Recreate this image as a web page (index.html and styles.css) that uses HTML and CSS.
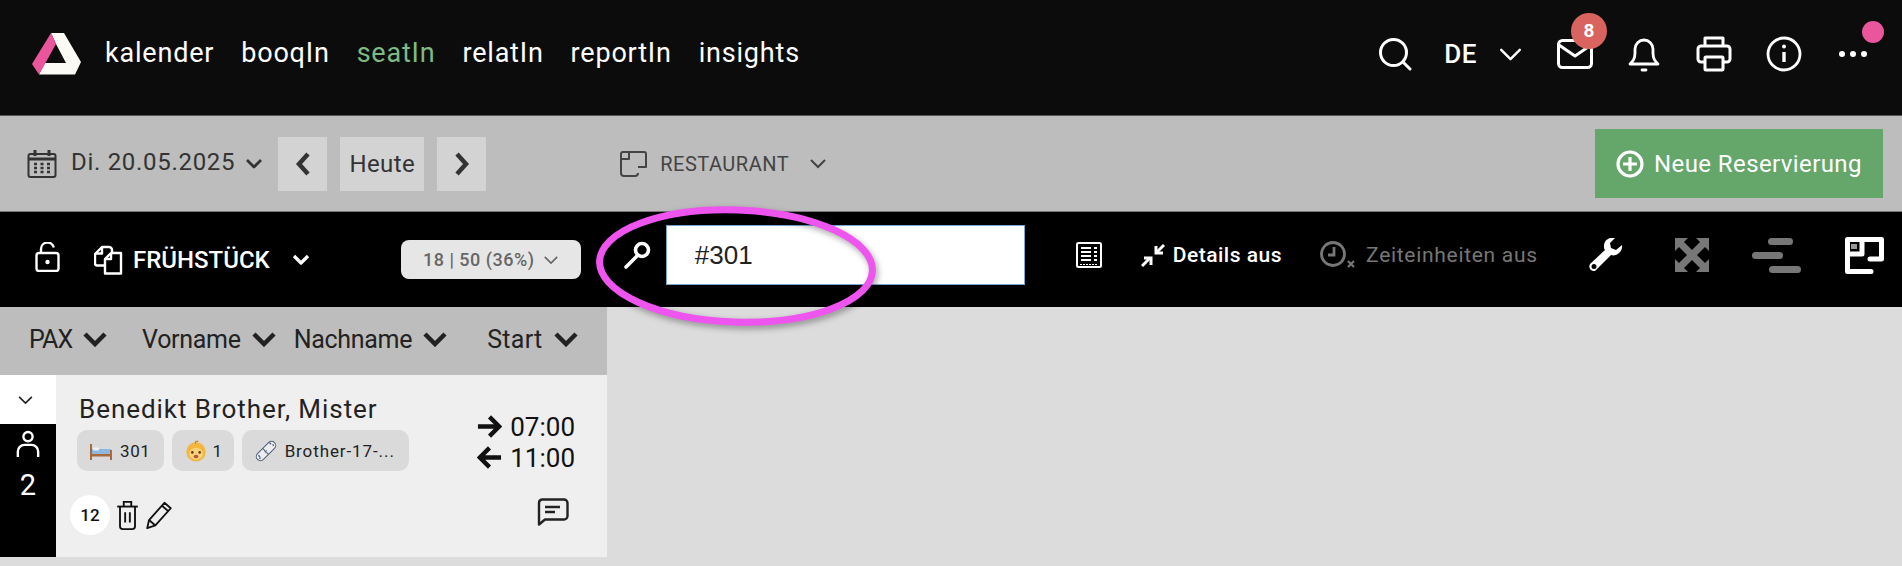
FILE: index.html
```html
<!DOCTYPE html>
<html lang="en">
<head>
  <meta charset="UTF-8" />
  <title>seatIn</title>
  <link rel="stylesheet" href="styles.css">
</head>
<body>
  <header class="topbar">
    <svg class="logo" viewBox="0 0 50 42">
      <path d="M19 0H32L49 29L43 41.500H7L13 30H34L24 11Z" fill="#fbfaf5"/>
      <path d="M19 0L24 11L7 41.500L0 31Z" fill="#ea559c"/>
    </svg>
    <nav class="mainnav">
      <a>kalender</a>
      <a>booqIn</a>
      <a class="active">seatIn</a>
      <a>relatIn</a>
      <a>reportIn</a>
      <a>insights</a>
    </nav>
    <div class="topicons">
      <svg class="ico-search" viewBox="0 0 34 34" fill="none" stroke="#fff" stroke-width="3" stroke-linecap="round"><circle cx="15.500" cy="15.500" r="13"/><path d="M25 25l7 7"/></svg>
      <span class="lang">DE</span>
      <svg class="ico-langchev" viewBox="0 0 24 14" fill="none" stroke="#fff" stroke-width="2.600" stroke-linecap="round" stroke-linejoin="round"><path d="M2 2l10 10L22 2"/></svg>
      <span class="mail">
        <svg class="ico-mail" viewBox="0 0 36 30" fill="none" stroke="#fff" stroke-width="3" stroke-linejoin="round"><rect x="1.500" y="1.500" width="33" height="27" rx="4"/><path d="M2 6l16 11L34 6"/></svg>
        <span class="badge">8</span>
      </span>
      <svg class="ico-bell" viewBox="0 0 32 36" fill="none" stroke="#fff" stroke-width="2.800" stroke-linecap="round" stroke-linejoin="round"><path d="M2 28c3-3 5-5 5-11V13a9 9 0 0 1 18 0v4c0 6 2 8 5 11z"/><path d="M14 34h4"/></svg>
      <svg class="ico-print" viewBox="0 0 36 36" fill="none" stroke="#fff" stroke-width="3" stroke-linejoin="round"><path d="M9 10V2h18v8"/><path d="M9 26H5a3 3 0 0 1-3-3V13a3 3 0 0 1 3-3h26a3 3 0 0 1 3 3v10a3 3 0 0 1-3 3h-4"/><rect x="9" y="21" width="18" height="13" rx="1"/></svg>
      <svg class="ico-info" viewBox="0 0 36 36" fill="none" stroke="#fff" stroke-width="2.800"><circle cx="18" cy="18" r="16"/><path d="M18 16v10" stroke-width="3.400"/><circle cx="18" cy="10.500" r="2" fill="#fff" stroke="none"/></svg>
      <span class="more">
        <svg class="ico-dots" viewBox="0 0 30 8" fill="#fff"><circle cx="4" cy="4" r="3"/><circle cx="15" cy="4" r="3"/><circle cx="26" cy="4" r="3"/></svg>
        <span class="pinkdot"></span>
      </span>
    </div>
  </header>

  <section class="datebar">
    <svg class="ico-cal" viewBox="0 0 30 28" fill="none" stroke="#333" stroke-width="2"><rect x="1.500" y="4" width="27" height="23" rx="2"/><path d="M1.500 9h27" stroke-width="3"/><path d="M8 0v6M22 0v6" stroke-width="3"/><path d="M7 14h3M13.500 14h3M20 14h3M7 18h3M13.500 18h3M20 18h3M7 22h3M13.500 22h3M20 22h3" stroke-width="2.400"/></svg>
    <span class="date">Di. 20.05.2025</span>
    <svg class="ico-datechev" viewBox="0 0 18 11" fill="none" stroke="#333" stroke-width="2.800" stroke-linejoin="round"><path d="M2 2l7 7 7-7"/></svg>
    <button class="navbtn square"><svg viewBox="0 0 16 24" fill="none" stroke="#333" stroke-width="4.500"><path d="M13 2L4 12l9 10"/></svg></button>
    <button class="navbtn today">Heute</button>
    <button class="navbtn square"><svg viewBox="0 0 16 24" fill="none" stroke="#333" stroke-width="4.500"><path d="M3 2l9 10-9 10"/></svg></button>
    <svg class="ico-room" viewBox="0 0 28 26" fill="none" stroke="#444" stroke-width="2" stroke-linejoin="round"><path d="M1 22V3a2 2 0 0 1 2-2h21a2 2 0 0 1 2 2v13h-8"/><path d="M1 8h8V1"/><path d="M1 22a3 3 0 0 0 3 3h11a3 3 0 0 0 3-3"/></svg>
    <span class="room">RESTAURANT</span>
    <svg class="ico-roomchev" viewBox="0 0 18 11" fill="none" stroke="#444" stroke-width="2"><path d="M2 2l7 7 7-7"/></svg>
    <button class="newres">
      <svg viewBox="0 0 28 28" fill="none" stroke="#fff" stroke-width="3.200"><circle cx="14" cy="14" r="12"/><path d="M14 7v14M7 14h14"/></svg>
      Neue Reservierung
    </button>
  </section>

  <section class="filterbar">
    <svg class="ico-lock" viewBox="0 0 25 30" fill="none" stroke="#fff" stroke-width="2.400"><rect x="1.500" y="11" width="22" height="18" rx="2.500"/><path d="M6 11V7a6.500 6.500 0 0 1 12.800-1.500"/><circle cx="12.500" cy="20" r="2.200" fill="#fff" stroke="none"/></svg>
    <svg class="ico-copy" viewBox="0 0 29 30" fill="none" stroke="#fff" stroke-width="2.400" stroke-linejoin="round"><path d="M10 20.500H3a2 2 0 0 1-2-2V9l7-7h7a3 3 0 0 1 3 3v3"/><path d="M8 2v6.500H1.500"/><path d="M11 14l6-6h10v20.500H11z"/><path d="M17 8v6h-6"/></svg>
    <span class="meal">FRÜHSTÜCK</span>
    <svg class="ico-mealchev" viewBox="0 0 18 12" fill="none" stroke="#fff" stroke-width="3.200" stroke-linejoin="round"><path d="M2 2l7 7 7-7"/></svg>
    <span class="pill">18 | 50 (36%)
      <svg viewBox="0 0 18 11" fill="none" stroke="#666" stroke-width="1.800"><path d="M2 2l7 7 7-7"/></svg>
    </span>
    <div class="filtertools">
      <svg class="ico-key" viewBox="0 0 30 30" fill="none" stroke="#fff"><circle cx="19" cy="10" r="6.500" stroke-width="3.600"/><path d="M14 16L3 27" stroke-width="3.600" stroke-linecap="round"/></svg>
      <input class="search" type="text" value="#301" />
      <svg class="ico-list" viewBox="0 0 26 26" fill="none" stroke="#fff" stroke-width="2"><rect x="1" y="1" width="24" height="24" rx="1.500"/><path d="M5 6h10M5 10h10M5 14h10M5 18h10M18 6h3M18 10h3M18 14h3M18 18h3"/><path d="M4 22.500h18" stroke-width="1" stroke-dasharray="2 1"/></svg>
      <span class="toggle on">
        <svg viewBox="0 0 24 24" fill="none" stroke="#fff" stroke-width="3"><path d="M23 2l-8 8"/><path d="M15 3v7h7"/><path d="M1 23l8-8"/><path d="M3 15h7v7"/></svg>
        Details aus
      </span>
      <span class="toggle off">
        <svg viewBox="0 0 36 28" fill="none" stroke="#777" stroke-width="2.800"><circle cx="13" cy="13" r="11.500"/><path d="M14 6v8H8"/><path d="M28 20l6 6M34 20l-6 6" stroke-width="2.200"/></svg>
        Zeiteinheiten aus
      </span>
      <svg class="ico-wrench" viewBox="0 0 34 34" fill="#fff"><path fill-rule="evenodd" d="M33 7l-6 5-5-2-1-5 5-5c-6-1-11 2-11 8 0 2 0 3 1 4L1 26c-1 2-1 4 1 6s5 1 6-1L22 17c5 2 12-3 11-10zM5 26a2.500 2.500 0 1 1 0 5 2.500 2.500 0 0 1 0-5z"/></svg>
      <svg class="ico-expand" viewBox="0 0 34 34" fill="#777"><path d="M0 0h13L9 4l8 8 8-8-4-4h13v13l-4-4-8 8 8 8 4-4v13H21l4-4-8-8-8 8 4 4H0V21l4 4 8-8-8-8-4 4z"/></svg>
      <svg class="ico-lines" viewBox="0 0 50 35" fill="#777"><rect x="16" y="0" width="25" height="7" rx="3.500"/><rect x="0" y="14" width="31" height="7" rx="3.500"/><rect x="17" y="28" width="32" height="7" rx="3.500"/></svg>
      <svg class="ico-plan" viewBox="0 0 39 37" fill="none" stroke="#fff" stroke-width="5" stroke-linecap="round" stroke-linejoin="round"><path d="M26 34.500H2.500V2.500H36.500V22H25"/><path d="M3 17H17V3"/><rect x="6" y="7" width="6" height="5" fill="#999" stroke="none"/></svg>
    </div>
  </section>

  <main class="content">
    <div class="listpanel">
      <div class="columns">
        <span class="col col-pax">PAX <svg viewBox="0 0 24 16" fill="none" stroke="#222" stroke-width="4.500"><path d="M2 3l10 10L22 3"/></svg></span>
        <span class="col col-first">Vorname <svg viewBox="0 0 24 16" fill="none" stroke="#222" stroke-width="4.500"><path d="M2 3l10 10L22 3"/></svg></span>
        <span class="col col-last">Nachname <svg viewBox="0 0 24 16" fill="none" stroke="#222" stroke-width="4.500"><path d="M2 3l10 10L22 3"/></svg></span>
        <span class="col col-start">Start <svg viewBox="0 0 24 16" fill="none" stroke="#222" stroke-width="4.500"><path d="M2 3l10 10L22 3"/></svg></span>
      </div>
      <article class="booking">
        <div class="side">
          <div class="expander"><svg viewBox="0 0 18 11" fill="none" stroke="#222" stroke-width="1.800"><path d="M2 2l7 7 7-7"/></svg></div>
          <div class="persons">
            <svg viewBox="0 0 26 30" fill="none" stroke="#fff" stroke-width="2.600"><circle cx="13" cy="7" r="5"/><path d="M2 29v-6a7 7 0 0 1 7-7h8a7 7 0 0 1 7 7v6"/></svg>
            <span>2</span>
          </div>
        </div>
        <div class="details">
          <div class="guest">
            <div class="name">Benedikt Brother, Mister</div>
            <div class="chips">
              <span class="chip">
                <svg viewBox="0 0 22 20"><rect x="1" y="8" width="20" height="5" fill="#8fb8e0"/><rect x="3" y="6.500" width="6" height="3" rx="1" fill="#eef0f5"/><rect x="1" y="13" width="20" height="2.500" fill="#a8693c"/><path d="M1 3v16M21 9v10" stroke="#a8693c" stroke-width="2" fill="none"/></svg>
                301
              </span>
              <span class="chip chip-baby">
                <svg viewBox="0 0 24 24"><circle cx="12" cy="13" r="10.500" fill="#f4b63f"/><ellipse cx="12" cy="15" rx="7.500" ry="6.500" fill="#fbd27a"/><circle cx="8" cy="13.500" r="1.400" fill="#5a3a1a"/><circle cx="16" cy="13.500" r="1.400" fill="#5a3a1a"/><ellipse cx="12" cy="18" rx="2.500" ry="1.800" fill="#b5543a"/><path d="M12 4c-2-2 1-3.500 2.500-2" stroke="#c9862a" stroke-width="1.400" fill="none"/></svg>
                1
              </span>
              <span class="chip chip-tag">
                <svg viewBox="0 0 26 26" fill="#eeeef2" stroke="#55657e" stroke-width="1.300"><path d="M3 16L16 3a4 4 0 0 1 7 7L10 23a4 4 0 0 1-7-7z"/><path d="M9 10l7 7" fill="none"/><path d="M17 3l2 2M21 5l1 2M4 18l2 2M5 22l2-1" fill="none" stroke-width="1.600"/><path d="M11.500 13l.6.6M13.500 12l.6.6M12 15l.6.6" fill="none"/></svg>
                Brother-17-...
              </span>
            </div>
            <div class="actions">
              <span class="count">12</span>
              <svg class="ico-trash" viewBox="0 0 24 32" fill="none" stroke="#111" stroke-width="2"><path d="M1 7h22"/><path d="M8 7V2h8v5"/><path d="M4 7v21a3 3 0 0 0 3 3h10a3 3 0 0 0 3-3V7"/><path d="M9.500 13v11M14.500 13v11"/></svg>
              <svg class="ico-pencil" viewBox="0 0 30 32" fill="none" stroke="#111" stroke-width="2" stroke-linejoin="round"><path d="M2 30l2-9L21 2l7 6-17 19z"/><path d="M18 5l7 6M4 21l7 6"/></svg>
            </div>
          </div>
          <div class="times">
            <div class="time"><svg viewBox="0 0 26 26" fill="none" stroke="#111" stroke-width="4.500"><path d="M1 13h20M13 3l10 10-10 10"/></svg>07:00</div>
            <div class="time"><svg viewBox="0 0 26 26" fill="none" stroke="#111" stroke-width="4.500"><path d="M25 13H5M13 3L3 13l10 10"/></svg>11:00</div>
            <svg class="ico-comment" viewBox="0 0 32 28" fill="none" stroke="#222" stroke-width="2.400" stroke-linejoin="round"><path d="M5 1.500h22a3.500 3.500 0 0 1 3.500 3.500v13a3.500 3.500 0 0 1-3.500 3.500H8l-6 5V5A3.500 3.500 0 0 1 5 1.500z"/><path d="M8 9h15M8 14h10"/></svg>
          </div>
        </div>
      </article>
    </div>
  </main>

  <!-- annotation drawn over the screenshot -->
  <svg class="circlemark" viewBox="0 0 290 130" fill="none">
    <ellipse cx="142" cy="62" rx="136.500" ry="56" stroke="#ee55ee" stroke-width="7" transform="rotate(2 142 62)"/>
  </svg>
</body>
</html>
```

FILE: styles.css
```css
* {
  box-sizing: border-box;
}
html, body {
  height: 100%;
}
body {
  margin: 0;
  overflow: hidden;
  font-family: Roboto, "Liberation Sans", sans-serif;
  background-color: #dcdcdc;
  color: #222;
}
svg {
  display: block;
  flex: none;
}
button {
  font-family: inherit;
  border: none;
  padding: 0;
}

/* top navigation */
.topbar {
  display: flex;
  align-items: center;
  height: 116px;
  padding-left: 32px;
  padding-bottom: 7px;
  background-color: #0c0c0c;
  border-bottom: 1px solid #555;
}
.logo {
  width: 50px;
  height: 42px;
}
.mainnav {
  display: flex;
  gap: 27px;
  margin-left: 23px;
  margin-bottom: 2px;
  font-size: 27px;
  letter-spacing: 0.8px;
  color: #fff;
}
.mainnav .active {
  color: #7dbb82;
}
.topicons {
  display: flex;
  align-items: center;
  margin-left: auto;
  padding-right: 34px;
}
.ico-search {
  width: 34px;
  height: 34px;
}
.lang {
  margin-left: 32px;
  font-size: 26px;
  font-weight: 500;
  letter-spacing: 0.6px;
  color: #fff;
}
.ico-langchev {
  width: 23px;
  height: 13px;
  margin-left: 22px;
}
.mail {
  position: relative;
  margin-left: 35px;
}
.ico-mail {
  width: 36px;
  height: 30px;
}
.badge {
  position: absolute;
  top: -26px;
  left: 14px;
  width: 36px;
  height: 36px;
  border-radius: 50%;
  background-color: #d9645f;
  color: #fff;
  font-size: 19px;
  font-weight: 700;
  line-height: 36px;
  text-align: center;
}
.ico-bell {
  width: 32px;
  height: 36px;
  margin-left: 35px;
}
.ico-print {
  width: 36px;
  height: 36px;
  margin-left: 36px;
}
.ico-info {
  width: 36px;
  height: 36px;
  margin-left: 34px;
}
.more {
  position: relative;
  margin-left: 36px;
}
.ico-dots {
  width: 30px;
  height: 8px;
}
.pinkdot {
  position: absolute;
  top: -29px;
  left: 24px;
  width: 22px;
  height: 22px;
  border-radius: 50%;
  background-color: #ea559c;
}

/* date row */
.datebar {
  display: flex;
  align-items: center;
  height: 95px;
  padding-left: 27px;
  background-color: #bdbdbd;
  color: #333;
}
.ico-cal {
  width: 30px;
  height: 28px;
}
.date {
  margin-left: 14px;
  margin-bottom: 4px;
  font-size: 24px;
  letter-spacing: 0.7px;
}
.ico-datechev {
  width: 18px;
  height: 11px;
  margin-left: 10px;
}
.navbtn {
  height: 54px;
  margin-left: 13px;
  background-color: #d3d3d3;
  color: #333;
  font-size: 24px;
  letter-spacing: 0.4px;
}
.ico-datechev + .navbtn {
  margin-left: 15px;
}
.navbtn.square {
  display: flex;
  align-items: center;
  justify-content: center;
  width: 49px;
}
.navbtn.square svg {
  width: 16px;
  height: 24px;
}
.navbtn.today {
  width: 84px;
}
.ico-room {
  width: 28px;
  height: 26px;
  margin-left: 134px;
}
.room {
  margin-left: 12px;
  font-size: 20px;
  letter-spacing: 0.5px;
  color: #444;
}
.ico-roomchev {
  width: 18px;
  height: 11px;
  margin-left: 20px;
}
.newres {
  display: flex;
  align-items: center;
  justify-content: center;
  gap: 10px;
  width: 288px;
  height: 69px;
  margin-left: auto;
  margin-right: 19px;
  background-color: #65a66b;
  color: #fff;
  font-size: 24px;
  letter-spacing: 0.4px;
}
.newres svg {
  width: 28px;
  height: 28px;
}

/* filter row */
.filterbar {
  display: flex;
  align-items: center;
  height: 96px;
  padding-left: 35px;
  background-color: #000;
  border-top: 1px solid #777;
  color: #fff;
}
.ico-lock {
  width: 25px;
  height: 30px;
  margin-bottom: 6px;
}
.ico-copy {
  width: 29px;
  height: 30px;
  margin-left: 34px;
}
.meal {
  margin-left: 10px;
  font-size: 24px;
  font-weight: 500;
}
.ico-mealchev {
  width: 18px;
  height: 12px;
  margin-left: 22px;
}
.pill {
  display: flex;
  align-items: center;
  justify-content: center;
  gap: 8px;
  width: 180px;
  height: 39px;
  margin-left: 91px;
  border-radius: 8px;
  background-color: #e6e6e6;
  color: #666;
  font-size: 18px;
  font-weight: 500;
  letter-spacing: 0.5px;
}
.pill svg {
  width: 16px;
  height: 10px;
}
.filtertools {
  display: flex;
  align-items: center;
  padding-bottom: 9px;
}
.ico-key {
  width: 30px;
  height: 30px;
  margin-left: 42px;
}
.search {
  width: 359px;
  height: 60px;
  margin-left: 13px;
  padding: 0 28px;
  border: 1px solid #7ba7cf;
  background-color: #fff;
  color: #222;
  font-family: "Liberation Sans", sans-serif;
  font-size: 26px;
}
.ico-list {
  width: 26px;
  height: 26px;
  margin-left: 51px;
}
.toggle {
  display: flex;
  align-items: center;
  gap: 8px;
  font-size: 21px;
  letter-spacing: 0.5px;
}
.toggle svg {
  width: 24px;
  height: 24px;
}
.toggle.on {
  margin-left: 39px;
  font-weight: 500;
}
.toggle.off {
  gap: 10px;
  margin-left: 38px;
  letter-spacing: 0.7px;
  color: #777;
}
.toggle.off svg {
  width: 36px;
  height: 28px;
}
.ico-wrench {
  width: 34px;
  height: 34px;
  margin-left: 51px;
}
.ico-expand {
  width: 34px;
  height: 34px;
  margin-left: 52px;
}
.ico-lines {
  width: 50px;
  height: 35px;
  margin-left: 43px;
}
.ico-plan {
  width: 39px;
  height: 37px;
  margin-left: 43px;
}

/* reservation list */
.listpanel {
  width: 607px;
  background-color: #bdbdbd;
}
.columns {
  display: flex;
  height: 68px;
  align-items: center;
  padding-bottom: 4px;
  font-size: 25px;
  letter-spacing: -0.3px;
}
.col {
  display: flex;
  align-items: center;
  gap: 11px;
}
.col svg {
  width: 24px;
  height: 16px;
}
.col-pax {
  margin-left: 29px;
  letter-spacing: -1px;
}
.col-first {
  margin-left: 35px;
}
.col-last {
  margin-left: 18px;
}
.col-start {
  margin-left: 40px;
  letter-spacing: 0.3px;
}
.booking {
  display: flex;
  height: 182px;
  background-color: #efefef;
}
.side {
  display: flex;
  flex-direction: column;
  width: 56px;
}
.expander {
  display: flex;
  align-items: center;
  justify-content: center;
  height: 49px;
  padding-right: 5px;
  background-color: #fff;
}
.expander svg {
  width: 17px;
  height: 10px;
}
.persons {
  display: flex;
  flex: 1;
  flex-direction: column;
  align-items: center;
  gap: 9px;
  padding-top: 5px;
  background-color: #000;
  color: #fff;
  font-size: 29px;
}
.persons svg {
  width: 24px;
  height: 30px;
}
.details {
  display: flex;
  flex: 1;
  justify-content: space-between;
  padding: 0 32px 0 21px;
}
.guest {
  padding-top: 19px;
}
.name {
  margin-left: 2px;
  font-size: 26px;
  letter-spacing: 0.95px;
}
.chips {
  display: flex;
  gap: 8px;
  margin-top: 6px;
}
.chip {
  display: flex;
  align-items: center;
  gap: 8px;
  height: 41px;
  padding: 0 14px 0 13px;
  border-radius: 10px;
  background-color: #dadada;
  font-size: 17px;
  letter-spacing: 0.6px;
}
.chip svg {
  width: 22px;
  height: 22px;
}
.chip-baby {
  gap: 5px;
  padding-right: 11px;
}
.chip-tag {
  letter-spacing: 0.9px;
}
.actions {
  display: flex;
  align-items: center;
  gap: 6px;
  margin-top: 24px;
}
.count {
  width: 40px;
  height: 40px;
  margin-left: -7px;
  border-radius: 50%;
  background-color: #fff;
  color: #111;
  font-size: 17px;
  font-weight: 500;
  line-height: 40px;
  text-align: center;
}
.ico-trash {
  width: 23px;
  height: 30px;
}
.ico-pencil {
  width: 28px;
  height: 29px;
}
.times {
  position: relative;
  padding-top: 36px;
}
.time {
  display: flex;
  align-items: center;
  gap: 8px;
  height: 31px;
  font-size: 26px;
  color: #111;
}
.time svg {
  width: 25px;
  height: 25px;
}
.ico-comment {
  width: 32px;
  height: 28px;
  margin: 25px 0 0 60px;
}

/* pink ellipse over the search field */
.circlemark {
  position: absolute;
  top: 204px;
  left: 594px;
  width: 290px;
  height: 130px;
  overflow: visible;
  filter: drop-shadow(2px 3px 3px rgba(0,0,0,0.35));
}
```
